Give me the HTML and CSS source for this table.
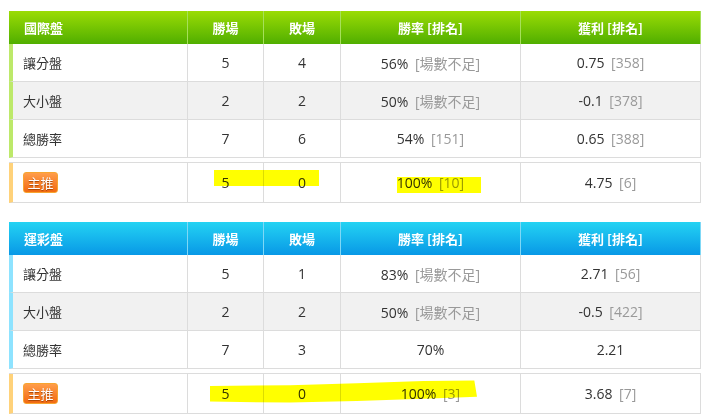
FILE: index.html
```html
<!DOCTYPE html>
<html lang="zh-Hant">
<head>
    <meta charset="UTF-8">
    <title>盤口戰績</title>
    <link rel="stylesheet" href="styles.css">
</head>
<body>

    <!-- 國際盤 -->
    <div class="board green">
        <table class="stats">
            <colgroup>
                <col class="c-name"><col class="c-win"><col class="c-lose"><col class="c-rate"><col class="c-profit">
            </colgroup>
            <tr class="head">
                <th class="name">國際盤</th><th>勝場</th><th>敗場</th><th>勝率 [排名]</th><th>獲利 [排名]</th>
            </tr>
            <tr>
                <td class="name">讓分盤</td><td>5</td><td>4</td>
                <td>56% <span class="rank">[場數不足]</span></td><td>0.75 <span class="rank">[358]</span></td>
            </tr>
            <tr class="alt">
                <td class="name">大小盤</td><td>2</td><td>2</td>
                <td>50% <span class="rank">[場數不足]</span></td><td>-0.1 <span class="rank">[378]</span></td>
            </tr>
            <tr>
                <td class="name">總勝率</td><td>7</td><td>6</td>
                <td>54% <span class="rank">[151]</span></td><td>0.65 <span class="rank">[388]</span></td>
            </tr>
        </table>
        <table class="stats summary">
            <colgroup>
                <col class="c-name"><col class="c-win"><col class="c-lose"><col class="c-rate"><col class="c-profit">
            </colgroup>
            <tr>
                <td class="name"><span class="badge">主推</span></td><td>5</td><td>0</td>
                <td>100% <span class="rank">[10]</span></td><td>4.75 <span class="rank">[6]</span></td>
            </tr>
        </table>
    </div>

    <!-- 運彩盤 -->
    <div class="board blue">
        <table class="stats">
            <colgroup>
                <col class="c-name"><col class="c-win"><col class="c-lose"><col class="c-rate"><col class="c-profit">
            </colgroup>
            <tr class="head">
                <th class="name">運彩盤</th><th>勝場</th><th>敗場</th><th>勝率 [排名]</th><th>獲利 [排名]</th>
            </tr>
            <tr>
                <td class="name">讓分盤</td><td>5</td><td>1</td>
                <td>83% <span class="rank">[場數不足]</span></td><td>2.71 <span class="rank">[56]</span></td>
            </tr>
            <tr class="alt">
                <td class="name">大小盤</td><td>2</td><td>2</td>
                <td>50% <span class="rank">[場數不足]</span></td><td>-0.5 <span class="rank">[422]</span></td>
            </tr>
            <tr>
                <td class="name">總勝率</td><td>7</td><td>3</td>
                <td>70%</td><td>2.21</td>
            </tr>
        </table>
        <table class="stats summary">
            <colgroup>
                <col class="c-name"><col class="c-win"><col class="c-lose"><col class="c-rate"><col class="c-profit">
            </colgroup>
            <tr>
                <td class="name"><span class="badge">主推</span></td><td>5</td><td>0</td>
                <td>100% <span class="rank">[3]</span></td><td>3.68 <span class="rank">[7]</span></td>
            </tr>
        </table>
    </div>

    <!-- marker highlights drawn over the page -->
    <span class="marker m1"></span>
    <span class="marker m2"></span>
    <span class="marker m3"></span>

</body>
</html>
```

FILE: styles.css
```css
* {
    margin: 0;
    padding: 0;
    box-sizing: border-box;
}

body {
    position: relative;
    background: #fff;
    font-family: "Open Sans", "Noto Sans CJK TC", sans-serif;
    color: #333;
    padding: 11px 0 0 9px;
}

.board {
    width: 692px;
    margin-bottom: 19px;
}

.stats {
    width: 692px;
    table-layout: fixed;
    border-collapse: separate;
    border-spacing: 0;
}

.c-name { width: 179px; }
.c-win { width: 76px; }
.c-lose { width: 77px; }
.c-rate { width: 180px; }
.c-profit { width: 180px; }

.stats th {
    height: 33px;
    font-family: "Noto Sans CJK TC", sans-serif;
    font-size: 13px;
    font-weight: bold;
    color: #fff;
    text-align: center;
    border-right: 1px solid #a6e05a;
}

.stats th.name {
    text-align: left;
    padding-left: 15px;
}

.stats td {
    height: 38px;
    font-size: 14px;
    text-align: center;
    border-right: 1px solid #dcdcdc;
    border-bottom: 1px solid #dcdcdc;
    white-space: nowrap;
}

.stats td.name {
    text-align: left;
    padding-left: 10px;
    font-family: "Noto Sans CJK TC", sans-serif;
    font-size: 13px;
    border-left: 4px solid #bde96a;
}

.stats tr.alt td {
    background: #f1f1f1;
}

.rank {
    color: #999;
    margin-left: 3px;
}

.rank:lang(zh-Hant) {
    font-family: "Open Sans", "Noto Sans CJK TC", sans-serif;
}

/* header colours */
.green .head th {
    background: linear-gradient(#9bdc05, #50ae00);
    border-right-color: #a6e05a;
}

.blue .head th {
    background: linear-gradient(#24d3f3, #0898e6);
    border-right-color: #7fd8f6;
}

.blue .stats td.name {
    border-left-color: #8ee3ff;
}

/* summary row */
.summary {
    margin-top: 4px;
    border-top: 1px solid #dcdcdc;
}

.summary td {
    height: 40px;
}

.stats.summary td.name {
    border-left-color: #ffd27a;
}

.badge {
    display: inline-block;
    width: 35px;
    height: 21px;
    line-height: 19px;
    text-align: center;
    font-size: 13px;
    color: #fff;
    text-shadow: 0 1px 1px #a04000;
    background: linear-gradient(#ff9d4a, #f26a12);
    border: 1px solid #f7a530;
    border-radius: 3px;
    vertical-align: middle;
}

/* yellow marker strokes */
.marker {
    position: absolute;
    background: #ffff00;
    mix-blend-mode: multiply;
}

.m1 {
    left: 214px;
    top: 170px;
    width: 105px;
    height: 16px;
}

.m2 {
    left: 397px;
    top: 177px;
    width: 84px;
    height: 16px;
}

.m3 {
    left: 210px;
    top: 380px;
    width: 267px;
    height: 24px;
    clip-path: polygon(0 25%, 30% 22%, 55% 14%, 80% 4%, 99% 2%, 100% 70%, 80% 78%, 55% 88%, 30% 94%, 0 90%);
}
```
